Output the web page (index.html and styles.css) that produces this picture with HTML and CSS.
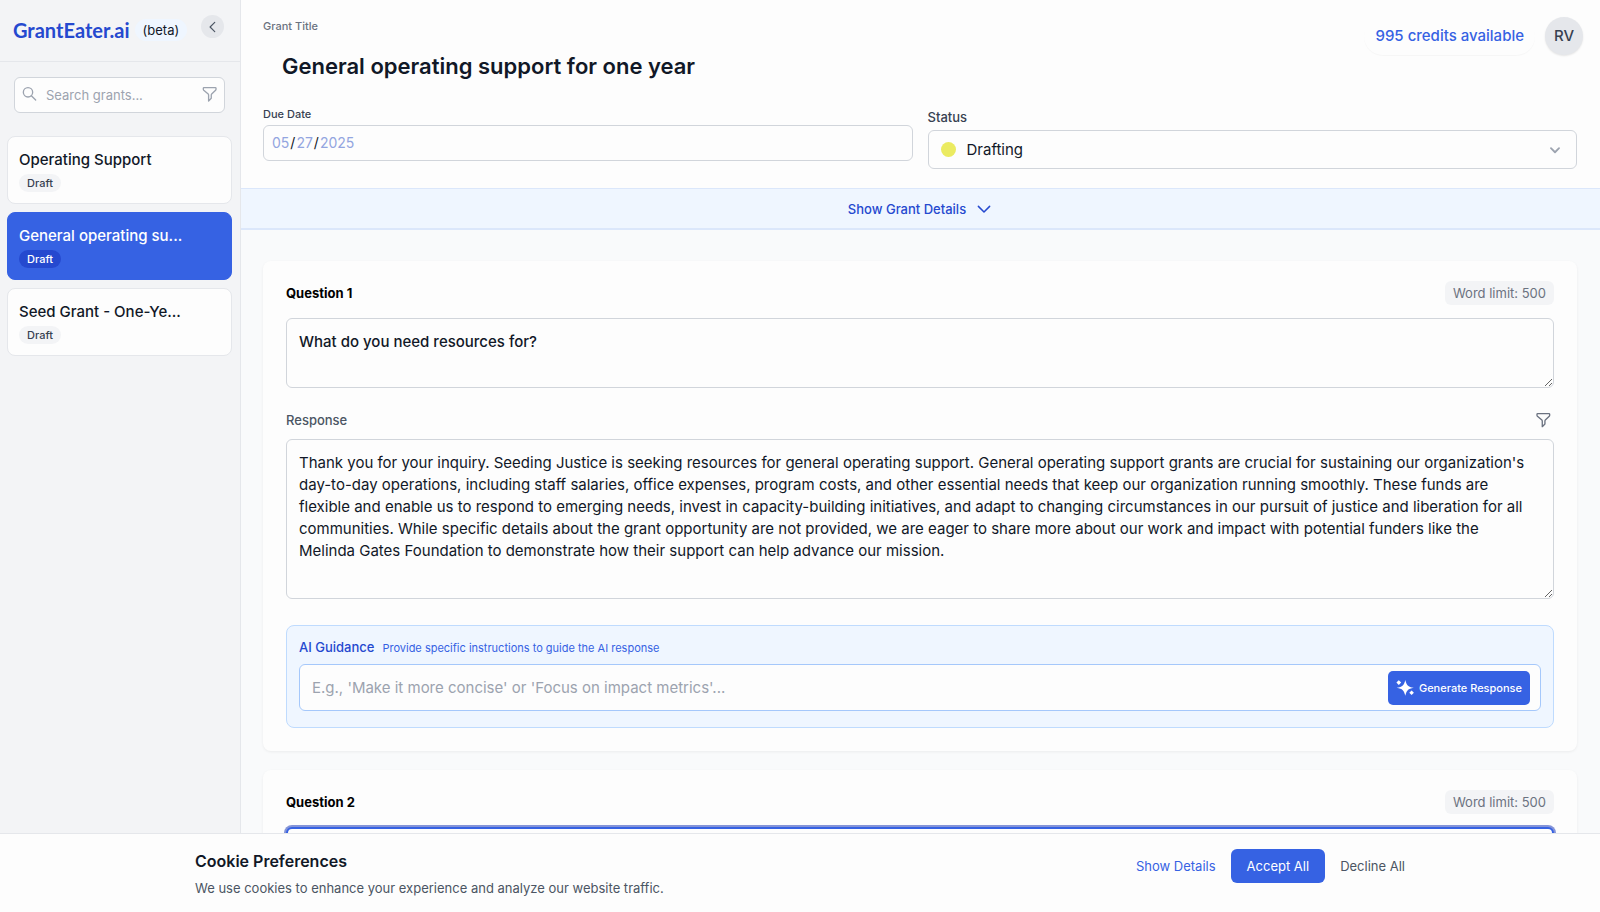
FILE: index.html
```
<!DOCTYPE html>
<html lang="en">
<head>
    <meta charset="UTF-8">
    <meta name="viewport" content="width=device-width, initial-scale=1.0">
    <title>GrantEater.ai</title>
    <link rel="stylesheet" href="styles.css">
</head>
<body>
    <div class="app">
        <aside class="sidebar">
            <div class="sidebar-header">
                <a href="#" class="logo">GrantEater.ai</a>
                <span class="beta">(beta)</span>
                <button class="collapse-btn" aria-label="Collapse sidebar">
                    <svg width="14" height="14" viewBox="0 0 24 24" fill="none" stroke="currentColor" stroke-width="2" stroke-linecap="round" stroke-linejoin="round"><path d="M15 20 7 12l8-8"/></svg>
                </button>
            </div>
            <div class="search">
                <svg width="16" height="16" viewBox="0 0 24 24" fill="none" stroke="currentColor" stroke-width="2" stroke-linecap="round"><circle cx="9" cy="8" r="7"/><path d="m14 13 6.500 6.500"/></svg>
                <input type="text" id="search" placeholder="Search grants..." aria-label="Search grants">
                <button class="icon-btn" aria-label="Filter grants">
                    <svg width="16" height="16" viewBox="0 0 24 24" fill="none" stroke="currentColor" stroke-width="2" stroke-linejoin="round"><path d="M3 1h17a1 1 0 0 1 1 1v1.500a2 2 0 0 1-.6 1.400L14.500 10.500a2 2 0 0 0-.6 1.400V17l-4 4v-9.100a2 2 0 0 0-.6-1.400L2.600 4.900A2 2 0 0 1 2 3.500V2a1 1 0 0 1 1-1Z"/></svg>
                </button>
            </div>
            <nav class="grant-list">
                <a href="#" class="grant">
                    <span class="grant-name">Operating Support</span>
                    <span class="tag">Draft</span>
                </a>
                <a href="#" class="grant active">
                    <span class="grant-name">General operating su...</span>
                    <span class="tag">Draft</span>
                </a>
                <a href="#" class="grant">
                    <span class="grant-name">Seed Grant - One-Ye...</span>
                    <span class="tag">Draft</span>
                </a>
            </nav>
        </aside>

        <main class="main">
            <header class="grant-header">
                <div class="title-row">
                    <div>
                        <span class="title-label">Grant Title</span>
                        <h1>General operating support for one year</h1>
                    </div>
                    <div class="account">
                        <a href="#" class="credits">995 credits available</a>
                        <button class="avatar">RV</button>
                    </div>
                </div>
                <div class="fields">
                    <div class="field">
                        <label for="dueDate" class="small-label">Due Date</label>
                        <input type="date" id="dueDate" value="2025-05-27">
                    </div>
                    <div class="field field-status">
                        <label for="status">Status</label>
                        <div class="select-wrap">
                            <span class="dot"></span>
                            <select id="status">
                                <option>Drafting</option>
                                <option>Submitted</option>
                            </select>
                            <svg class="select-arrow" width="18" height="18" viewBox="0 0 20 20" fill="none" stroke="currentColor" stroke-width="2" stroke-linecap="round" stroke-linejoin="round"><path d="m5.500 8 4.500 4.500L14.500 8"/></svg>
                        </div>
                    </div>
                </div>
            </header>

            <button class="details-toggle">
                Show Grant Details
                <svg width="18" height="18" viewBox="0 0 24 24" fill="none" stroke="currentColor" stroke-width="2" stroke-linecap="round" stroke-linejoin="round"><path d="m4.500 8.500 7.500 7.500 7.500-7.500"/></svg>
            </button>

            <div class="questions">
                <section class="card">
                    <div class="card-head">
                        <h2><label for="question1">Question 1</label></h2>
                        <span class="word-limit">Word limit: 500</span>
                    </div>
                    <textarea id="question1" class="question-text">What do you need resources for?</textarea>
                    <div class="response-head">
                        <label for="response1">Response</label>
                        <button class="icon-btn" aria-label="Response filters">
                            <svg width="16" height="16" viewBox="0 0 24 24" fill="none" stroke="currentColor" stroke-width="2" stroke-linejoin="round"><path d="M4 2.500h17a1 1 0 0 1 1 1v1.500a2 2 0 0 1-.6 1.400L15.500 12a2 2 0 0 0-.6 1.400V18l-4 4v-8.600a2 2 0 0 0-.6-1.400L3.600 6.400A2 2 0 0 1 3 5V3.500a1 1 0 0 1 1-1Z"/></svg>
                        </button>
                    </div>
                    <textarea id="response1" class="response-text">Thank you for your inquiry. Seeding Justice is seeking resources for general operating support. General operating support grants are crucial for sustaining our organization's day-to-day operations, including staff salaries, office expenses, program costs, and other essential needs that keep our organization running smoothly. These funds are flexible and enable us to respond to emerging needs, invest in capacity-building initiatives, and adapt to changing circumstances in our pursuit of justice and liberation for all communities. While specific details about the grant opportunity are not provided, we are eager to share more about our work and impact with potential funders like the Melinda Gates Foundation to demonstrate how their support can help advance our mission.</textarea>
                    <div class="guidance">
                        <div class="guidance-head">
                            <label for="guidance1">AI Guidance</label>
                            <span>Provide specific instructions to guide the AI response</span>
                        </div>
                        <div class="guidance-box">
                            <input type="text" id="guidance1" placeholder="E.g., 'Make it more concise' or 'Focus on impact metrics'...">
                            <button class="generate-btn">
                                <svg width="18" height="18" viewBox="0 0 18 18" fill="currentColor"><path d="M9.300 1c1.300 5 2.500 7 8.500 7.800-6 .9-7.200 2.800-8.500 8-1.300-5.200-2.500-7.100-8.700-8C6.800 8 8 6.200 9.300 1Z"/><path d="M2.800 1.200 5.200 3.600 2.800 6 .4 3.600ZM15.600 11.400l2.300 2.300-2.300 2.300-2.300-2.300Z"/></svg>
                                Generate Response
                            </button>
                        </div>
                    </div>
                </section>

                <section class="card">
                    <div class="card-head">
                        <h2><label for="question2">Question 2</label></h2>
                        <span class="word-limit">Word limit: 500</span>
                    </div>
                    <textarea id="question2" class="question-text highlighted"></textarea>
                </section>
            </div>
        </main>
    </div>

    <div class="cookie-bar">
        <div class="cookie-inner">
            <div>
                <h3>Cookie Preferences</h3>
                <p>We use cookies to enhance your experience and analyze our website traffic.</p>
            </div>
            <div class="cookie-actions">
                <button class="link-btn">Show Details</button>
                <button class="accept-btn">Accept All</button>
                <button class="decline-btn">Decline All</button>
            </div>
        </div>
    </div>
</body>
</html>
```
FILE: styles.css
```
* {
    box-sizing: border-box;
}
body {
    margin: 0;
    font-family: Inter, sans-serif;
    font-size: 15px;
    line-height: 22px;
    color: #111827;
    background-color: #f9fafb;
}
button, input, select, textarea {
    font: inherit;
    color: inherit;
}
button {
    padding: 0;
    border: none;
    background: none;
    cursor: pointer;
}
a {
    text-decoration: none;
    color: inherit;
}
h1, h2, h3, p {
    margin: 0;
}
svg {
    display: block;
    flex: none;
}
.app {
    display: flex;
    height: 100vh;
    overflow: hidden;
}

/* Sidebar */
.sidebar {
    flex: none;
    width: 241px;
    background: #f3f4f6;
    border-right: 1px solid #e5e7eb;
}
.sidebar-header {
    display: flex;
    align-items: flex-start;
    height: 62px;
    padding: 15px 16px 0 13px;
    border-bottom: 1px solid #e5e7eb;
}
.logo {
    font-family: Lato, sans-serif;
    font-size: 20px;
    font-weight: 700;
    line-height: 30px;
    color: #2549cf;
}
.beta {
    margin: 4px auto 0 5px;
    padding: 0 8px;
    border-radius: 12px;
    background: #eff6ff;
    font-size: 13px;
}
.collapse-btn {
    display: flex;
    align-items: center;
    justify-content: center;
    width: 23px;
    height: 23px;
    border-radius: 50%;
    background: #e5e7eb;
    color: #4b5563;
}
.search {
    display: flex;
    align-items: center;
    height: 36px;
    margin: 15px 15px 23px 14px;
    padding: 0 6px 0 7px;
    border: 1px solid #d1d5db;
    border-radius: 6px;
    background: #fdfdfd;
    color: #9ca3af;
}
.search input {
    flex: 1;
    min-width: 0;
    padding: 0 0 0 8px;
    border: none;
    outline: none;
    background: none;
    font-size: 13px;
}
.search input::placeholder {
    color: #9ca3af;
}
.grant-list {
    display: flex;
    flex-direction: column;
    gap: 8px;
    padding: 0 8px 0 7px;
}
.grant {
    display: flex;
    flex-direction: column;
    align-items: flex-start;
    gap: 3px;
    padding: 12px 11px 11px;
    border: 1px solid #e5e7eb;
    border-radius: 8px;
    background: #fdfdfd;
}
.grant-name {
    font-weight: 500;
}
.tag {
    padding: 0 8px;
    border-radius: 10px;
    background: #f3f4f6;
    font-size: 11px;
    line-height: 18px;
    font-weight: 500;
    color: #374151;
}
.grant.active {
    border-color: #3662e3;
    background: #3662e3;
    color: #fff;
}
.grant.active .tag {
    background: #2549cf;
    color: #fff;
}

/* Grant header */
.main {
    flex: 1;
    min-width: 0;
}
.grant-header {
    padding: 17px 23px 19px 22px;
    background: #fdfdfd;
}
.title-row {
    display: flex;
    justify-content: space-between;
}
.title-label {
    display: block;
    font-size: 11px;
    line-height: 18px;
    font-weight: 500;
    color: #6b7280;
}
h1 {
    padding: 16px 19px;
    font-size: 22px;
    line-height: 30px;
    font-weight: 600;
}
.account {
    display: flex;
    align-items: flex-start;
}
.credits {
    padding: 8px 11px;
    border-radius: 20px;
    box-shadow: 0 1px 1px rgba(0, 0, 0, 0.03);
    font-weight: 500;
    color: #3662e3;
}
.avatar {
    width: 38px;
    height: 38px;
    margin: 0 -6px 0 10px;
    border-radius: 50%;
    background: #e5e7eb;
    box-shadow: 0 1px 2px rgba(0, 0, 0, 0.1);
    font-weight: 500;
    color: #374151;
}
.fields {
    display: grid;
    grid-template-columns: 1fr 1fr;
    gap: 15px;
    margin-top: 8px;
}
.field label {
    display: block;
    font-size: 13px;
    line-height: 18px;
    font-weight: 500;
    color: #374151;
}
.field .small-label {
    margin-bottom: 2px;
    font-size: 11px;
}
.field-status {
    padding-top: 3px;
}
.field-status label {
    margin-bottom: 4px;
}
#dueDate {
    display: block;
    width: 100%;
    height: 36px;
    padding: 0 7px;
    border: 1px solid #d1d5db;
    border-radius: 6px;
    background: #fdfdfd;
    font-size: 14px;
}
#dueDate::-webkit-calendar-picker-indicator {
    display: none;
}
#dueDate::-webkit-datetime-edit-month-field,
#dueDate::-webkit-datetime-edit-day-field,
#dueDate::-webkit-datetime-edit-year-field {
    color: #93a5e0;
}
.select-wrap {
    position: relative;
}
.select-wrap select {
    display: block;
    width: 100%;
    height: 39px;
    padding: 0 38px;
    border: 1px solid #d1d5db;
    border-radius: 6px;
    background: #fdfdfd;
    appearance: none;
}
.dot {
    position: absolute;
    left: 13px;
    top: 12px;
    width: 15px;
    height: 15px;
    border-radius: 50%;
    background: #ebeb61;
}
.select-arrow {
    position: absolute;
    right: 13px;
    top: 11px;
    color: #9ca3af;
}
.details-toggle {
    display: flex;
    align-items: center;
    justify-content: center;
    gap: 9px;
    width: 100%;
    height: 42px;
    border-top: 1px solid #dbe7fb;
    border-bottom: 2px solid #dbe7fb;
    background: #eff6ff;
    font-size: 13px;
    font-weight: 500;
    color: #2549cf;
}

/* Questions */
.questions {
    display: flex;
    flex-direction: column;
    gap: 19px;
    padding: 31px 23px 31px 22px;
}
.card {
    padding: 20px 23px 23px;
    border-radius: 8px;
    background: #fdfdfd;
    box-shadow: 0 1px 3px rgba(0, 0, 0, 0.06);
}
.card-head, .response-head {
    display: flex;
    align-items: center;
    justify-content: space-between;
}
.card-head {
    margin-bottom: 13px;
}
h2 {
    font-size: 13px;
    font-weight: 700;
    color: #000;
}
.word-limit {
    padding: 1px 8px;
    border-radius: 6px;
    background: #f3f4f6;
    font-size: 13px;
    color: #6b7280;
}
textarea {
    display: block;
    width: 100%;
    padding: 12px 20px 12px 12px;
    border: 1px solid #d1d5db;
    border-radius: 6px;
    background: #fdfdfd;
    resize: vertical;
}
.question-text {
    height: 70px;
    font-weight: 500;
}
.response-text {
    height: 160px;
}
.response-head {
    padding: 21px 3px 8px 0;
    font-size: 13px;
    font-weight: 500;
    color: #4b5563;
}
.response-head .icon-btn {
    color: #6b7280;
}
.guidance {
    margin-top: 26px;
    padding: 10px 12px 16px;
    border: 1px solid #bfdbfe;
    border-radius: 8px;
    background: #eff6ff;
}
.guidance-head {
    display: flex;
    align-items: baseline;
    gap: 8px;
    margin-bottom: 5px;
    color: #2549cf;
}
.guidance-head label {
    font-size: 13px;
    font-weight: 500;
}
.guidance-head span {
    font-size: 11px;
    color: #3662e3;
}
.guidance-box {
    display: flex;
    align-items: center;
    height: 47px;
    padding: 0 10px 0 12px;
    border: 1px solid #a5c8fb;
    border-radius: 6px;
    background: #fdfdfd;
}
.guidance-box input {
    flex: 1;
    padding: 0;
    border: none;
    outline: none;
    background: none;
}
.guidance-box input::placeholder {
    color: #9ca3af;
}
.generate-btn {
    display: flex;
    align-items: center;
    gap: 5px;
    height: 34px;
    padding: 0 8px;
    border-radius: 5px;
    background: #3662e3;
    font-size: 11px;
    font-weight: 500;
    color: #fff;
}
.highlighted {
    border: 2px solid #3662e3;
    box-shadow: 0 0 0 2px #8494d8;
}

/* Cookie banner */
.cookie-bar {
    position: fixed;
    left: 0;
    right: 0;
    bottom: 0;
    border-top: 1px solid #e5e7eb;
    background: #fdfdfd;
}
.cookie-inner {
    display: flex;
    align-items: flex-start;
    justify-content: space-between;
    max-width: 1210px;
    margin: 0 auto;
    padding: 15px 0 14px;
}
h3 {
    margin-bottom: 5px;
    font-size: 16px;
    line-height: 24px;
    font-weight: 600;
}
.cookie-inner p {
    font-size: 13px;
    line-height: 20px;
    color: #4b5563;
}
.cookie-actions {
    display: flex;
    gap: 15px;
    font-size: 13px;
    line-height: 34px;
}
.link-btn {
    color: #3662e3;
}
.accept-btn {
    padding: 0 16px;
    border-radius: 6px;
    background: #3662e3;
    color: #fff;
}
.decline-btn {
    color: #4b5563;
}
```
